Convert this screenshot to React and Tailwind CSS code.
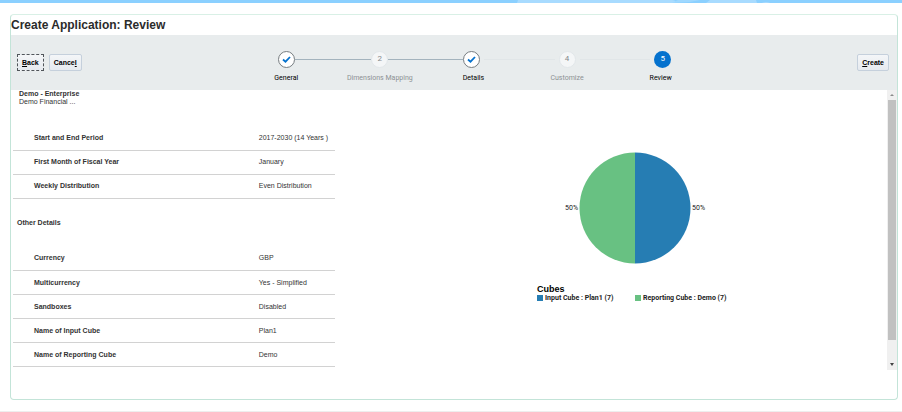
import clsx from 'clsx'

const steps = [
  { label: 'General', state: 'done' },
  { label: 'Dimensions Mapping', state: 'disabled' },
  { label: 'Details', state: 'done' },
  { label: 'Customize', state: 'disabled' },
  { label: 'Review', state: 'current' },
]

// index = the gap after each step
const visited = [true, true, false, false]

const periodRows = [
  ['Start and End Period', '2017-2030 (14 Years )'],
  ['First Month of Fiscal Year', 'January'],
  ['Weekly Distribution', 'Even Distribution'],
]

const otherRows = [
  ['Currency', 'GBP'],
  ['Multicurrency', 'Yes - Simplified'],
  ['Sandboxes', 'Disabled'],
  ['Name of Input Cube', 'Plan1'],
  ['Name of Reporting Cube', 'Demo'],
]

function TopBanner() {
  return (
    <div className="h-[3px] overflow-hidden bg-[#8bd0ff]">
      <svg className="ml-auto block" width="402" height="3" aria-hidden="true">
        <path d="M18 0H172Q178 1 174 3H17Z" fill="#a8dbff" />
        <path d="M178 0H200L190 2L172 3Z" fill="#9fd8ff" />
        <path d="M210 0H256L257 3H206Z" fill="#a8dbff" />
        <path d="M262 3Q266 1 270 3Z" fill="#a8dbff" />
      </svg>
    </div>
  )
}

function ToolbarButton({ children, focused }) {
  return (
    <button
      type="button"
      className={clsx(
        'h-[17px] shrink-0 border bg-linear-to-b from-[#f4f6f8] to-[#e6eaef] px-1 text-[7px] leading-none font-bold text-black',
        focused ? 'border-dashed border-[#50555a]' : 'rounded-xs border-[#c5d0dc]'
      )}
    >
      {children}
    </button>
  )
}

function Connector({ on, show, side }) {
  return (
    <span
      className={clsx(
        'h-px flex-1',
        show && (on ? 'bg-[#a3b3bd]' : 'bg-[#e1e6e8]'),
        show && !on && (side === 'left' ? 'mr-1' : 'ml-1')
      )}
    />
  )
}

function Step({ index, label, state }) {
  return (
    <li className="flex flex-col items-center" aria-current={state === 'current' ? 'step' : undefined}>
      <div className="flex w-full items-center">
        <Connector side="left" show={index > 0} on={visited[index - 1]} />
        <span
          className={clsx(
            'flex size-[17px] shrink-0 items-center justify-center rounded-full text-[8px] leading-none',
            state === 'done' && 'border border-[#777d81] bg-white',
            state === 'disabled' && 'border border-[#e2e7ea] bg-[#f4f6f7] text-[#85898c]',
            state === 'current' && 'bg-[#0572ce] text-white'
          )}
        >
          {state === 'done' ? (
            <svg width="9" height="7" viewBox="0 0 9 7" fill="none" stroke="#0572ce" strokeWidth="1.8" aria-hidden="true">
              <path d="M1 3.5L3.5 5.7L8 1" />
            </svg>
          ) : (
            index + 1
          )}
        </span>
        <Connector side="right" show={index < steps.length - 1} on={visited[index]} />
      </div>
      <span
        className={clsx(
          'mt-[5px] text-[7px] leading-[10px] whitespace-nowrap',
          state === 'disabled' ? 'text-[#8d9194]' : 'text-black'
        )}
      >
        {label}
      </span>
    </li>
  )
}

function DetailTable({ rows, label }) {
  return (
    <table className="w-full table-fixed border-collapse text-[7px] leading-[10px] text-[#333]" aria-label={label}>
      <tbody>
        {rows.map(([name, value]) => (
          <tr key={name} className="h-6 border-b border-[#d2d2d2]">
            <th scope="row" className="w-[76%] p-0 pl-[21px] text-left font-bold">
              {name}
            </th>
            <td className="p-0 pl-px whitespace-nowrap">{value}</td>
          </tr>
        ))}
      </tbody>
    </table>
  )
}

function CubesChart() {
  return (
    <figure className="w-[196px] text-[7px] text-[#222]">
      <div className="flex items-center justify-center gap-px font-['Roboto','Liberation_Sans',sans-serif]">
        <span>50%</span>
        <svg width="112" height="112" viewBox="0 0 112 112" role="img" aria-label="Cubes">
          <path d="M56 0.5A55.5 55.5 0 0 0 56 111.5Z" fill="#68c182" />
          <path d="M56 0.5A55.5 55.5 0 0 1 56 111.5Z" fill="#267db3" />
        </svg>
        <span>50%</span>
      </div>
      <figcaption className="mt-5">
        <p className="text-[9px] leading-[10px] font-bold text-black">Cubes</p>
        <ul className="grid grid-cols-2 font-['Roboto','Liberation_Sans',sans-serif] leading-[8px] font-bold whitespace-nowrap">
          <li className="flex items-center gap-0.5">
            <span className="size-1.5 bg-[#267db3]" />
            Input Cube : Plan1 (7)
          </li>
          <li className="flex items-center gap-0.5">
            <span className="size-1.5 bg-[#68c182]" />
            Reporting Cube : Demo (7)
          </li>
        </ul>
      </figcaption>
    </figure>
  )
}

function ScrollTrack() {
  return (
    <div className="flex w-[10px] shrink-0 flex-col items-center bg-[#f0f0f0]" aria-hidden="true">
      <svg width="10" height="10">
        <path d="M3 6L5 4L7 6Z" fill="#8a8a8a" />
      </svg>
      <div className="w-2 grow-[240] bg-[#c1c1c1]" />
      <div className="grow-[20]" />
      <svg width="10" height="10">
        <path d="M3 3H7L5 6Z" fill="#444" />
      </svg>
    </div>
  )
}

export default function App() {
  return (
    <div className="bg-white font-['Liberation_Sans',Arial,sans-serif]">
      <TopBanner />
      <main className="mt-[11px] mr-1 ml-[10px] rounded-sm border border-[#c3e4d8] border-t-[#d9f0e6] pb-[29px]">
        <h1 className="text-[12px] leading-5 font-bold text-[#2b2b2b]">Create Application: Review</h1>

        <div className="flex h-[55px] items-center bg-[#e8eced] pr-2 pl-1.5">
          <div className="flex gap-[5px]">
            <ToolbarButton focused>
              <u>B</u>ack
            </ToolbarButton>
            <ToolbarButton>
              Cance<u>l</u>
            </ToolbarButton>
          </div>
          <nav className="flex flex-1 justify-center pt-2 pl-2" aria-label="Progress">
            <ol className="grid w-[468px] grid-cols-5 font-['Roboto','Liberation_Sans',sans-serif]">
              {steps.map((step, i) => (
                <Step key={step.label} index={i} {...step} />
              ))}
            </ol>
          </nav>
          <ToolbarButton>
            <u>C</u>reate
          </ToolbarButton>
        </div>

        <div className="flex">
          <div className="flex flex-1 pb-[3px]">
            <section className="w-[37%] pl-0.5">
              <div className="pl-1.5 text-[7px] leading-[8px] text-[#333]">
                <h2 className="font-bold">Demo - Enterprise</h2>
                <p>Demo Financial ...</p>
              </div>
              <div className="mt-5">
                <DetailTable rows={periodRows} label="Period" />
              </div>
              <h3 className="mt-[19px] mb-[19px] pl-1 text-[7px] leading-[10px] font-bold text-[#333]">
                Other Details
              </h3>
              <DetailTable rows={otherRows} label="Other Details" />
            </section>
            <section className="flex flex-1 justify-center pt-[62px] pl-12">
              <CubesChart />
            </section>
          </div>
          <ScrollTrack />
        </div>
      </main>
      <hr className="mt-[11px] border-[#eeeeee]" />
    </div>
  )
}
